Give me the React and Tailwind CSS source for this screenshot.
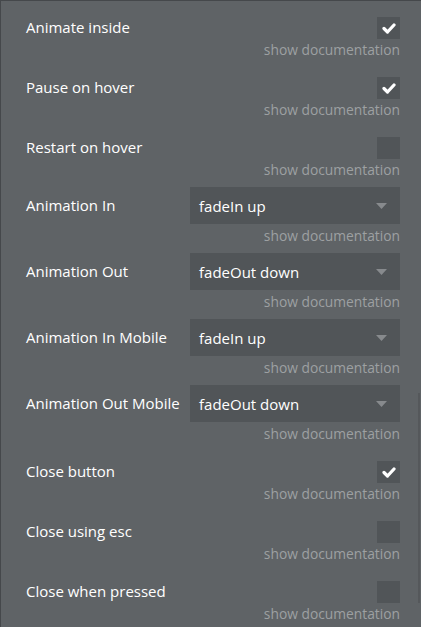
import React from "react";

const font = { fontFamily: '"Open Sans", "Noto Sans", sans-serif' };

function Check() {
  return (
    <svg width="14" height="11" viewBox="0 0 14 11">
      <polyline points="2,5.5 5.5,9 12,2" fill="none" stroke="#ffffff" strokeWidth="3.2" strokeLinecap="round" strokeLinejoin="round" />
    </svg>
  );
}

function Doc({ mt }) {
  return (
    <div className={`${mt} h-5 text-right text-[13.8px] leading-5 text-[#9da0a2]`}>show documentation</div>
  );
}

function CheckRow({ label, checked }) {
  return (
    <div className="h-[60px] pt-[17px]">
      <div className="flex h-[22px] items-center justify-between">
        <span className="-mt-[2px] text-[15px] text-white">{label}</span>
        <div className="flex h-[22px] w-[23px] items-center justify-center bg-[#515558]">
          {checked && <Check />}
        </div>
      </div>
      <Doc mt="mt-[1px]" />
    </div>
  );
}

function SelectRow({ label, value }) {
  return (
    <div className="h-[66px] pt-[7px]">
      <div className="flex h-[37px] items-center justify-between">
        <span className="text-[15px] text-white">{label}</span>
        <div className="flex h-[37px] w-[210px] items-center justify-between bg-[#515558] pl-[9px] pr-[13px]">
          <span className="mt-[1px] text-[15px] text-white">{value}</span>
          <svg width="11" height="6" viewBox="0 0 11 6">
            <polygon points="0,0 11,0 5.5,6" fill="#878a8d" />
          </svg>
        </div>
      </div>
      <Doc mt="mt-[2px]" />
    </div>
  );
}

export default function App() {
  return (
    <div className="relative h-[627px] w-[421px] overflow-hidden border-t border-l border-[#45484b] bg-[#5f6366]" style={font}>
      <div className="pl-[25px] pr-[21px] -mt-[1px]">
        <CheckRow label="Animate inside" checked />
        <CheckRow label="Pause on hover" checked />
        <CheckRow label="Restart on hover" />
        <SelectRow label="Animation In" value="fadeIn up" />
        <SelectRow label="Animation Out" value="fadeOut down" />
        <SelectRow label="Animation In Mobile" value="fadeIn up" />
        <SelectRow label="Animation Out Mobile" value="fadeOut down" />
        <CheckRow label="Close button" checked />
        <CheckRow label="Close using esc" />
        <CheckRow label="Close when pressed" />
      </div>
      <div className="absolute right-[1px] top-[392px] h-[210px] w-[2px] bg-[#55585b]" />
    </div>
  );
}
